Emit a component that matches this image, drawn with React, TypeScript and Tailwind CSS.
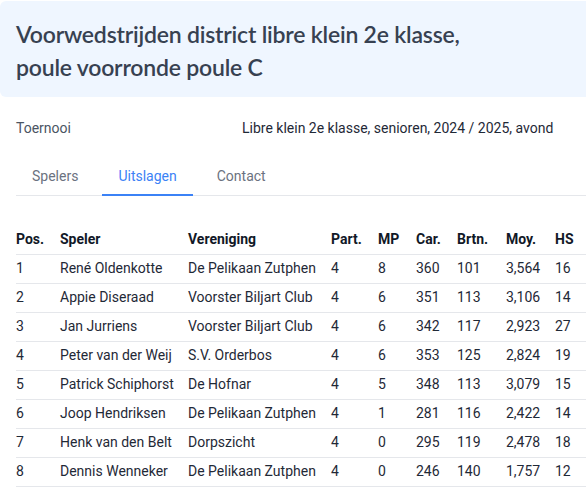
import React from 'react';

const rows = [
  { pos: 1, name: 'René Oldenkotte', club: 'De Pelikaan Zutphen', part: 4, mp: 8, car: 360, brtn: 101, moy: '3,564', hs: 16 },
  { pos: 2, name: 'Appie Diseraad', club: 'Voorster Biljart Club', part: 4, mp: 6, car: 351, brtn: 113, moy: '3,106', hs: 14 },
  { pos: 3, name: 'Jan Jurriens', club: 'Voorster Biljart Club', part: 4, mp: 6, car: 342, brtn: 117, moy: '2,923', hs: 27 },
  { pos: 4, name: 'Peter van der Weij', club: 'S.V. Orderbos', part: 4, mp: 6, car: 353, brtn: 125, moy: '2,824', hs: 19 },
  { pos: 5, name: 'Patrick Schiphorst', club: 'De Hofnar', part: 4, mp: 5, car: 348, brtn: 113, moy: '3,079', hs: 15 },
  { pos: 6, name: 'Joop Hendriksen', club: 'De Pelikaan Zutphen', part: 4, mp: 1, car: 281, brtn: 116, moy: '2,422', hs: 14 },
  { pos: 7, name: 'Henk van den Belt', club: 'Dorpszicht', part: 4, mp: 0, car: 295, brtn: 119, moy: '2,478', hs: 18 },
  { pos: 8, name: 'Dennis Wenneker', club: 'De Pelikaan Zutphen', part: 4, mp: 0, car: 246, brtn: 140, moy: '1,757', hs: 12 },
];

const tabs = ['Spelers', 'Uitslagen', 'Contact'];

export default function App() {
  return (
    <div className="w-[586px] h-[499px] overflow-hidden bg-white [font-family:Roboto,sans-serif]">
      <div className="w-[640px]">
        {/* title block */}
        <div className="mt-px rounded-md bg-[#eff6ff] px-4 pt-[17px] pb-[13px]">
          <h1 className="[font-family:Lato,sans-serif] text-[23px] tracking-[-0.2px] leading-[33px] font-semibold text-[#374151]">
            Voorwedstrijden district libre klein 2e klasse,
            <br />
            poule voorronde poule C
          </h1>
        </div>

        {/* meta */}
        <div className="flex items-center px-4 mt-[21px] text-[14px]">
          <div className="w-[226px] text-[#4b5563]">Toernooi</div>
          <div className="text-[#1f2937]">Libre klein 2e klasse, senioren, 2024 / 2025, avond</div>
        </div>

        {/* tabs */}
        <div className="mx-4 mt-[27px] flex gap-2 border-b border-[#e5e7eb] text-[14px]">
          {tabs.map((t) => (
            <div
              key={t}
              className={
                t === 'Uitslagen'
                  ? 'px-4 pb-[7px] -mb-px border-b-2 border-[#3b82f6] text-[#3b82f6]'
                  : 'px-4 pb-[7px] text-[#6b7280]'
              }
            >
              {t}
            </div>
          ))}
        </div>

        {/* results table */}
        <table className="ml-4 mt-[29px] table-fixed border-collapse text-[14px] text-[#111827]">
          <colgroup>
            <col className="w-[44px]" />
            <col className="w-[128px]" />
            <col className="w-[143px]" />
            <col className="w-[47px]" />
            <col className="w-[38px]" />
            <col className="w-[41px]" />
            <col className="w-[49px]" />
            <col className="w-[49px]" />
            <col className="w-[60px]" />
          </colgroup>
          <thead>
            <tr className="h-[29px] border-b border-[#e5e7eb] text-left">
              <th className="font-bold">Pos.</th>
              <th className="font-bold">Speler</th>
              <th className="font-bold">Vereniging</th>
              <th className="font-bold">Part.</th>
              <th className="font-bold">MP</th>
              <th className="font-bold">Car.</th>
              <th className="font-bold">Brtn.</th>
              <th className="font-bold">Moy.</th>
              <th className="font-bold">HS</th>
            </tr>
          </thead>
          <tbody>
            {rows.map((r) => (
              <tr key={r.pos} className="h-[29px] border-b border-[#e5e7eb] text-[#1f2937]">
                <td>{r.pos}</td>
                <td className="whitespace-nowrap">{r.name}</td>
                <td className="whitespace-nowrap">{r.club}</td>
                <td>{r.part}</td>
                <td>{r.mp}</td>
                <td>{r.car}</td>
                <td>{r.brtn}</td>
                <td>{r.moy}</td>
                <td>{r.hs}</td>
              </tr>
            ))}
          </tbody>
        </table>
      </div>
    </div>
  );
}
